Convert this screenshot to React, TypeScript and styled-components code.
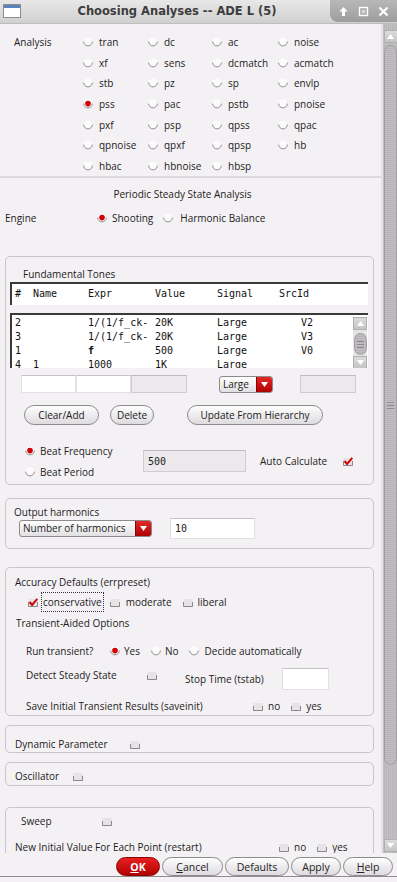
import React from 'react';
import styled, { createGlobalStyle, css } from 'styled-components';

const uiFont = `"Open Sans", "DejaVu Sans", sans-serif`;
const monoFont = `"DejaVu Sans Mono", "Liberation Mono", monospace`;

const GlobalStyle = createGlobalStyle`
  html, body {
    margin: 0;
    padding: 0;
    background: #f4f1f4;
  }
  body {
    font-family: ${uiFont};
    font-size: 10px;
    color: #1c1c1c;
  }
  * {
    box-sizing: border-box;
  }
`;

const Window = styled.div`
  width: 397px;
  height: 882px;
  display: flex;
  flex-direction: column;
  background: #f4f1f4;
  overflow: hidden;
`;

// ---------- title bar ----------
const TitleBar = styled.div`
  height: 24px;
  flex-shrink: 0;
  display: flex;
  align-items: flex-start;
  background: linear-gradient(#e8e8e8, #d0d0d0);
  border-bottom: 1px solid #bdbdbd;
`;
const WindowIcon = styled.div`
  width: 18px;
  height: 14px;
  margin: 4px 3px 0 3px;
  border: 1px solid #8c8c8c;
  background: linear-gradient(#5b82bf 0 3px, #ffffff 3px);
`;
const Title = styled.div`
  flex: 1;
  text-align: center;
  font-family: "DejaVu Sans", sans-serif;
  font-weight: bold;
  font-size: 11.5px;
  line-height: 23px;
  color: #3d3d3d;
`;
const TitleControls = styled.div`
  width: 67px;
  height: 22px;
  display: flex;
  align-items: center;
  justify-content: space-around;
  padding: 0 4px;
  background: linear-gradient(#b8b8b8, #9d9d9d);
  border-bottom-left-radius: 8px;
`;
const ControlSvg = styled.svg`
  width: 11px;
  height: 11px;
`;

// ---------- body + scrollbar ----------
const Body = styled.div`
  height: 829px;
  flex-shrink: 0;
  display: flex;
`;
const Content = styled.div`
  flex: 1;
  overflow: hidden;
`;
const ScrollBar = styled.div`
  width: 16px;
  display: flex;
  flex-direction: column;
  align-items: center;
  padding: 6px 0 1px 1px;
  background: repeating-linear-gradient(90deg, #c3c0c3 0 1px, #b9b6b9 1px 2px);
  border-left: 2px solid #e4e1e4;
`;
const ScrollArrow = styled.div<{ $size: number }>`
  width: ${({ $size }) => $size}px;
  height: ${({ $size }) => $size - 1}px;
  flex-shrink: 0;
  display: flex;
  align-items: center;
  justify-content: center;
  background: linear-gradient(#dcdcdc, #c4c4c4);
  border: 1px solid #b0b0b0;
`;
const ScrollThumb = styled.div<{ $height: number; $width: number }>`
  width: ${({ $width }) => $width}px;
  height: ${({ $height }) => $height}px;
  flex-shrink: 0;
  margin-top: 2px;
  display: flex;
  align-items: center;
  justify-content: center;
  border: 1px solid #a19ea1;
  border-radius: 7px;
  background: repeating-linear-gradient(0deg, #c2bfc2 0 1px, #b6b3b6 1px 2px);
`;
const ScrollSpacer = styled.div`
  flex: 1;
`;
const Grip = styled.div`
  width: 7px;
  height: 7px;
  background: repeating-linear-gradient(#8e8b8e 0 1px, transparent 1px 3px);
`;

// ---------- analysis choice grid ----------
const AnalysisGrid = styled.div`
  display: grid;
  grid-template-columns: 83px 65px 64px 66px 1fr;
  grid-auto-rows: 20.67px;
  padding-top: 7.67px;
  align-items: center;
`;
const SectionLabel = styled.div`
  grid-row: 1 / span 7;
  align-self: start;
  padding-left: 14px;
  line-height: 20.67px;
`;
const Option = styled.label<{ $gap?: number; $ml?: number }>`
  display: flex;
  align-items: center;
  gap: ${({ $gap = 6 }) => $gap}px;
  margin-left: ${({ $ml = 0 }) => $ml}px;
  white-space: nowrap;
`;
const Divider = styled.div`
  height: 2px;
  background: #dcd9dc;
`;
const Heading = styled.div`
  margin-top: 9px;
  padding-right: 16px;
  line-height: 14px;
  text-align: center;
`;
const Row = styled.div<{ $top?: number; $height?: number; $left?: number }>`
  display: flex;
  align-items: center;
  margin-top: ${({ $top = 0 }) => $top}px;
  height: ${({ $height = 14 }) => $height}px;
  padding-left: ${({ $left = 0 }) => $left}px;
  white-space: nowrap;
`;
const FixedLabel = styled.span<{ $width: number; $ml?: number }>`
  width: ${({ $width }) => $width}px;
  margin-left: ${({ $ml = 0 }) => $ml}px;
  flex-shrink: 0;
`;

// ---------- group boxes ----------
const GroupBox = styled.div<{ $top: number; $pad: string; $height?: number }>`
  margin: ${({ $top }) => $top}px 7px 0 5px;
  padding: ${({ $pad }) => $pad};
  border: 1px solid #c9c5c9;
  border-radius: 5px;
  ${({ $height }) =>
    $height &&
    css`
      height: ${$height}px;
    `}
`;
const BoxTitle = styled.div<{ $ml?: number; $lh?: number }>`
  margin-left: ${({ $ml = 0 }) => $ml}px;
  line-height: ${({ $lh = 14 }) => $lh}px;
`;

// ---------- tone table ----------
const toneColumns = css`
  display: grid;
  grid-template-columns: 18px 55px 67px 62px 66px 30px;
  font-family: ${monoFont};
  font-size: 10px;
  color: #111;
`;
const ToneHeader = styled.div`
  ${toneColumns};
  margin-top: 1px;
  height: 23px;
  padding-left: 3px;
  line-height: 19px;
  background: #fff;
  border-top: 2px solid #3a3a3a;
  border-left: 2px solid #3a3a3a;
`;
const ToneList = styled.div`
  margin-top: 8px;
  height: 55px;
  display: flex;
  overflow: hidden;
  background: #fff;
  border-top: 2px solid #3a3a3a;
  border-left: 2px solid #3a3a3a;
`;
const ToneRows = styled.div`
  flex: 1;
  padding: 1px 0 0 3px;
`;
const ToneRow = styled.div`
  ${toneColumns};
  line-height: 14px;
`;
const Cell = styled.span<{ $right?: boolean; $bold?: boolean }>`
  white-space: pre;
  text-align: ${({ $right }) => ($right ? 'right' : 'left')};
  font-weight: ${({ $bold }) => ($bold ? 'bold' : 'normal')};
`;
const MiniScroll = styled.div`
  width: 14px;
  margin: 2px 1px 1px 0;
  display: flex;
  flex-direction: column;
  align-items: center;
  gap: 1px;
  background: #e6e3e6;
`;

// ---------- fields, combos, buttons ----------
const TextField = styled.div<{ $width: number; $height: number; $grey?: boolean; $ml?: number }>`
  width: ${({ $width }) => $width}px;
  height: ${({ $height }) => $height}px;
  margin-left: ${({ $ml = 0 }) => $ml}px;
  flex-shrink: 0;
  padding-left: 4px;
  display: flex;
  align-items: center;
  font-family: ${monoFont};
  font-size: 10px;
  background: ${({ $grey }) => ($grey ? '#ebe9eb' : '#ffffff')};
  border: 1px solid ${({ $grey }) => ($grey ? '#cfcccf' : '#e3e0e3')};
  border-top-color: ${({ $grey }) => ($grey ? '#bdbabd' : '#c6c3c6')};
`;
const Combo = styled.div<{ $width: number; $ml?: number }>`
  width: ${({ $width }) => $width}px;
  height: 17px;
  margin-left: ${({ $ml = 0 }) => $ml}px;
  flex-shrink: 0;
  display: flex;
  border: 1px solid #8c8a8c;
  border-radius: 3px;
  overflow: hidden;
  background: linear-gradient(#ffffff, #e2e0e2);
`;
const ComboText = styled.span`
  flex: 1;
  padding-left: 3px;
  line-height: 15px;
`;
const ComboArrow = styled.span`
  width: 16px;
  display: flex;
  align-items: center;
  justify-content: center;
  background: linear-gradient(#e42a2a, #b00000);
  border-left: 1px solid #900000;
`;
const PillButton = styled.div<{ $width: number; $ml?: number; $primary?: boolean }>`
  width: ${({ $width }) => $width}px;
  height: 20px;
  margin-left: ${({ $ml = 0 }) => $ml}px;
  flex-shrink: 0;
  display: flex;
  align-items: center;
  justify-content: center;
  border: 1px solid #8e8b8e;
  border-radius: 10px;
  background: linear-gradient(#fefefe, #dedbde);
  color: #222;
  ${({ $primary }) =>
    $primary &&
    css`
      border-color: #8c0000;
      background: linear-gradient(#e82020, #b30000);
      color: #fff;
      font-weight: bold;
    `}
`;
const Mnemonic = styled.span`
  text-decoration: underline;
`;
const RadioStack = styled.div`
  width: 118px;
  flex-shrink: 0;
  display: flex;
  flex-direction: column;
`;
const StackItem = styled.div`
  height: 21px;
  display: flex;
  align-items: center;
`;
const FocusLabel = styled.span`
  height: 20px;
  margin-left: 3px;
  padding: 0 1px;
  line-height: 18px;
  border: 1px dotted #333;
`;
const TopAligned = styled.div<{ $mt?: number }>`
  align-self: flex-start;
  margin-top: ${({ $mt = 0 }) => $mt}px;
  display: flex;
  align-items: center;
  line-height: 14px;
`;

// ---------- footer ----------
const Footer = styled.div`
  height: 24px;
  flex-shrink: 0;
  display: flex;
  justify-content: flex-end;
  gap: 2px;
  padding: 4px 4px 0 0;
  border-bottom: 1px solid #8f8c8f;
`;
const FooterButton = styled(PillButton)`
  height: 19px;
  font-size: 10.5px;
`;

// ---------- icons ----------
const IconSvg = styled.svg<{ $w: number; $h: number }>`
  width: ${({ $w }) => $w}px;
  height: ${({ $h }) => $h}px;
  flex-shrink: 0;
  display: block;
`;

const Radio = ({ on }: { on?: boolean }) => (
  <IconSvg $w={10} $h={10} viewBox="0 0 10 10">
    <circle cx="5" cy="5" r="4.5" fill="#fcfbfc" />
    <path d="M0.7 4.6 A4.3 4.3 0 0 0 9.3 4.6" fill="none" stroke="#8d8a8d" strokeWidth="1" />
    {on && <circle cx="5" cy="4.6" r="2.8" fill="#d40000" />}
  </IconSvg>
);

const Check = ({ on }: { on?: boolean }) => (
  <IconSvg $w={10} $h={9} viewBox="0 0 10 9">
    <rect x="0.5" y="1" width="9" height="7.5" fill="#e6e3e6" />
    <path d="M0.5 4 V8.5 H9.5 V4" fill="none" stroke="#8a878a" />
    {on && <path d="M1.6 4 L4.1 7 L9.3 0.8" fill="none" stroke="#d40000" strokeWidth="2" />}
  </IconSvg>
);

const Triangle = ({ up, color = '#fff' }: { up?: boolean; color?: string }) => (
  <IconSvg $w={7} $h={5} viewBox="0 0 7 5">
    <path d={up ? 'M0 5 L3.5 0 L7 5 Z' : 'M0 0 L7 0 L3.5 5 Z'} fill={color} />
  </IconSvg>
);

const analyses = [
  'tran', 'dc', 'ac', 'noise',
  'xf', 'sens', 'dcmatch', 'acmatch',
  'stb', 'pz', 'sp', 'envlp',
  'pss', 'pac', 'pstb', 'pnoise',
  'pxf', 'psp', 'qpss', 'qpac',
  'qpnoise', 'qpxf', 'qpsp', 'hb',
  'hbac', 'hbnoise', 'hbsp',
];

const tones = [
  ['2', '', '1/(1/f_ck-', '20K', 'Large', 'V2'],
  ['3', '', '1/(1/f_ck-', '20K', 'Large', 'V3'],
  ['1', '', 'f', '500', 'Large', 'V0'],
  ['4', '1', '1000', '1K', 'Large', ''],
];

export default function App() {
  return (
    <>
      <GlobalStyle />
      <Window>
        <TitleBar>
          <WindowIcon />
          <Title>Choosing Analyses -- ADE L (5)</Title>
          <TitleControls>
            <ControlSvg viewBox="0 0 11 11">
              <path d="M5.5 1 L9.5 5.5 H7 V10 H4 V5.5 H1.5 Z" fill="#fff" />
            </ControlSvg>
            <ControlSvg viewBox="0 0 11 11">
              <rect x="1.5" y="1.5" width="8" height="8" fill="none" stroke="#fff" strokeWidth="1.4" />
              <rect x="3.5" y="4" width="4" height="3.5" fill="#fff" opacity="0.5" />
            </ControlSvg>
            <ControlSvg viewBox="0 0 11 11">
              <path d="M1.5 1.5 L9.5 9.5 M9.5 1.5 L1.5 9.5" stroke="#fff" strokeWidth="2.2" />
            </ControlSvg>
          </TitleControls>
        </TitleBar>

        <Body>
          <Content>
            <AnalysisGrid>
              <SectionLabel>Analysis</SectionLabel>
              {analyses.map((name) => (
                <Option key={name}>
                  <Radio on={name === 'pss'} />
                  {name}
                </Option>
              ))}
            </AnalysisGrid>
            <Divider />

            <Heading>Periodic Steady State Analysis</Heading>
            <Row $top={9} $height={16} $left={5}>
              <FixedLabel $width={92}>Engine</FixedLabel>
              <Option $gap={5}>
                <Radio on />
                Shooting
              </Option>
              <Option $gap={7} $ml={10}>
                <Radio />
                Harmonic Balance
              </Option>
            </Row>

            <GroupBox $top={30} $pad="10px 5px 2px 4px">
              <BoxTitle $ml={13}>Fundamental Tones</BoxTitle>
              <ToneHeader>
                <Cell>#</Cell>
                <Cell>Name</Cell>
                <Cell>Expr</Cell>
                <Cell>Value</Cell>
                <Cell>Signal</Cell>
                <Cell style={{ marginLeft: -4 }}>SrcId</Cell>
              </ToneHeader>
              <ToneList>
                <ToneRows>
                  {tones.map((t, i) => (
                    <ToneRow key={i}>
                      <Cell>{t[0]}</Cell>
                      <Cell>{t[1]}</Cell>
                      <Cell $bold={t[2] === 'f'}>{t[2]}</Cell>
                      <Cell>{t[3]}</Cell>
                      <Cell>{t[4]}</Cell>
                      <Cell $right>{t[5]}</Cell>
                    </ToneRow>
                  ))}
                </ToneRows>
                <MiniScroll>
                  <ScrollArrow $size={14}>
                    <Triangle up />
                  </ScrollArrow>
                  <ScrollThumb $height={22} $width={13}>
                    <Grip />
                  </ScrollThumb>
                  <ScrollArrow $size={14}>
                    <Triangle />
                  </ScrollArrow>
                </MiniScroll>
              </ToneList>

              <Row $top={7} $height={18} $left={11}>
                <TextField $width={55} $height={18} />
                <TextField $width={55} $height={18} />
                <TextField $width={56} $height={18} $grey />
                <Combo $width={54} $ml={32}>
                  <ComboText>Large</ComboText>
                  <ComboArrow>
                    <Triangle />
                  </ComboArrow>
                </Combo>
                <TextField $width={56} $height={18} $grey $ml={27} />
              </Row>

              <Row $top={12} $height={20} $left={14}>
                <PillButton $width={75}>Clear/Add</PillButton>
                <PillButton $width={44} $ml={11}>Delete</PillButton>
                <PillButton $width={136} $ml={33}>Update From Hierarchy</PillButton>
              </Row>

              <Row $top={15} $height={42} $left={15}>
                <RadioStack>
                  <StackItem>
                    <Option $gap={5}>
                      <Radio on />
                      Beat Frequency
                    </Option>
                  </StackItem>
                  <StackItem>
                    <Option $gap={5}>
                      <Radio />
                      Beat Period
                    </Option>
                  </StackItem>
                </RadioStack>
                <TextField $width={103} $height={22} $grey>500</TextField>
                <FixedLabel $width={83} $ml={14}>Auto Calculate</FixedLabel>
                <Check on />
              </Row>
            </GroupBox>

            <GroupBox $top={13} $pad="7px 0 9px 8px">
              <BoxTitle $lh={12}>Output harmonics</BoxTitle>
              <Row $height={21} $left={5}>
                <Combo $width={133}>
                  <ComboText>Number of harmonics</ComboText>
                  <ComboArrow>
                    <Triangle />
                  </ComboArrow>
                </Combo>
                <TextField $width={85} $height={21} $ml={18}>10</TextField>
              </Row>
            </GroupBox>

            <GroupBox $top={18} $pad="7px 0 2px 9px">
              <BoxTitle>Accuracy Defaults (errpreset)</BoxTitle>
              <Row $top={3} $height={20} $left={13}>
                <Check on />
                <FocusLabel>conservative</FocusLabel>
                <Option $gap={6} $ml={6}>
                  <Check />
                  moderate
                </Option>
                <Option $gap={5} $ml={11}>
                  <Check />
                  liberal
                </Option>
              </Row>
              <BoxTitle $ml={1} style={{ marginTop: 4 }}>Transient-Aided Options</BoxTitle>
              <Row $top={13} $height={16} $left={11}>
                <FixedLabel $width={84}>Run transient?</FixedLabel>
                <Option $gap={4}>
                  <Radio on />
                  Yes
                </Option>
                <Option $gap={4} $ml={11}>
                  <Radio />
                  No
                </Option>
                <Option $gap={6} $ml={10}>
                  <Radio />
                  Decide automatically
                </Option>
              </Row>
              <Row $top={9} $height={22} $left={11}>
                <TopAligned>
                  <FixedLabel $width={121}>Detect Steady State</FixedLabel>
                  <Check />
                </TopAligned>
                <FixedLabel $width={81} $ml={28}>Stop Time (tstab)</FixedLabel>
                <TextField $width={47} $height={22} $ml={16} />
              </Row>
              <Row $top={9} $height={14} $left={11}>
                <FixedLabel $width={227}>Save Initial Transient Results (saveinit)</FixedLabel>
                <Option $gap={5}>
                  <Check />
                  no
                </Option>
                <Option $gap={5} $ml={11}>
                  <Check />
                  yes
                </Option>
              </Row>
            </GroupBox>

            <GroupBox $top={9} $pad="11px 0 0 9px" $height={28}>
              <Row>
                <FixedLabel $width={115}>Dynamic Parameter</FixedLabel>
                <Check />
              </Row>
            </GroupBox>

            <GroupBox $top={9} $pad="6px 0 0 9px" $height={24}>
              <Row>
                <FixedLabel $width={58}>Oscillator</FixedLabel>
                <Check />
              </Row>
            </GroupBox>

            <GroupBox $top={21} $pad="6px 0 0 9px" $height={80}>
              <Row $left={6}>
                <FixedLabel $width={81}>Sweep</FixedLabel>
                <Check />
              </Row>
              <Row $top={12}>
                <FixedLabel $width={264}>New Initial Value For Each Point (restart)</FixedLabel>
                <Option $gap={5}>
                  <Check />
                  no
                </Option>
                <Option $gap={5} $ml={11}>
                  <Check />
                  yes
                </Option>
              </Row>
            </GroupBox>
          </Content>

          <ScrollBar>
            <ScrollArrow $size={14}>
              <Triangle up />
            </ScrollArrow>
            <ScrollThumb $height={720} $width={13}>
              <Grip />
            </ScrollThumb>
            <ScrollSpacer />
            <ScrollArrow $size={14}>
              <Triangle />
            </ScrollArrow>
          </ScrollBar>
        </Body>

        <Footer>
          <FooterButton $width={44} $primary>
            <Mnemonic>O</Mnemonic>K
          </FooterButton>
          <FooterButton $width={61}>
            <Mnemonic>C</Mnemonic>ancel
          </FooterButton>
          <FooterButton $width={64}>Defaults</FooterButton>
          <FooterButton $width={50}>Apply</FooterButton>
          <FooterButton $width={50}>
            <Mnemonic>H</Mnemonic>elp
          </FooterButton>
        </Footer>
      </Window>
    </>
  );
}
